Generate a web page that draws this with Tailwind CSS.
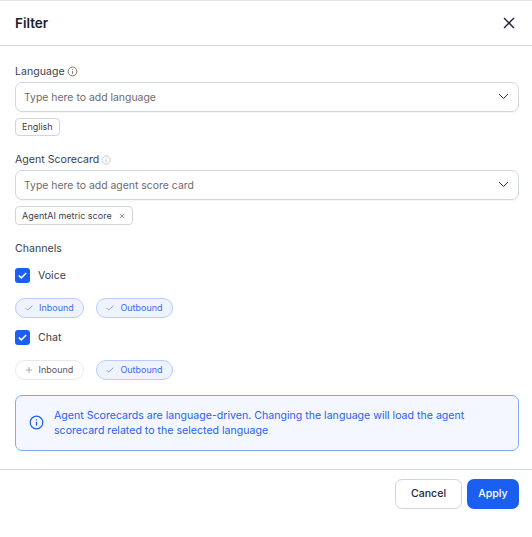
<!DOCTYPE html>
<html lang="en">
<head>
    <meta charset="UTF-8">
    <meta name="viewport" content="width=device-width, initial-scale=1.0">
    <title>Filter</title>
    <script src="https://cdn.jsdelivr.net/npm/@tailwindcss/browser@4"></script>
</head>
<body class="bg-white font-['Inter',sans-serif] text-[#1f2433] h-[537px] overflow-hidden">
    <!-- header -->
    <header class="h-[46px] border-t border-t-[#e3e4e8] border-b border-b-[#d0d4de] flex items-center justify-between pl-[15px] pr-[15px]">
        <h2 class="text-[13.5px] font-semibold text-[#1a1d2e]">Filter</h2>
        <svg class="w-[14px] h-[14px] text-[#1f2433] mr-[1px]" viewBox="0 0 14 14" fill="none" stroke="currentColor" stroke-width="1.4"><path d="M2 2l10 10M12 2L2 12"/></svg>
    </header>

    <main class="pl-[15px] pr-[13px] pt-[18px]">
        <!-- language -->
        <div class="flex items-center gap-[2px] h-[15px] text-[10.6px] leading-[15px] text-[#3a3f4f]">
            <span>Language</span>
            <svg class="w-[11px] h-[11px] text-[#7a6f5f] mb-[1px]" viewBox="0 0 12 12" fill="none" stroke="currentColor" stroke-width="1"><circle cx="6" cy="6" r="4.8"/><path d="M6 5.5v3M6 3.4v1"/></svg>
        </div>
        <div class="mt-[3px] h-[30px] border border-[#d0d4de] rounded-[7px] flex items-center justify-between pl-[8px] pr-[9px] shadow-[0_1px_1px_rgba(20,30,60,0.04)]">
            <span class="text-[10.45px] pt-[1px] text-[#6f6a6e]">Type here to add language</span>
            <svg class="w-[11px] h-[7px] text-[#2a3348] mb-[1px]" viewBox="0 0 11 7" fill="none" stroke="currentColor" stroke-width="1"><path d="M1 1l4.5 4.5L10 1"/></svg>
        </div>
        <div class="mt-[6px] flex">
            <span class="h-[18px] px-[6px] border border-[#d0d4de] rounded-[4px] text-[9px] leading-[16px] text-[#3a3f4f]">English</span>
        </div>

        <!-- agent scorecard -->
        <div class="mt-[16px] flex items-center gap-[2px] h-[15px] text-[10.6px] leading-[15px] text-[#3a3f4f]">
            <span>Agent Scorecard</span>
            <svg class="w-[10px] h-[10px] text-[#a9aeb8]" viewBox="0 0 12 12" fill="none" stroke="currentColor" stroke-width="1"><circle cx="6" cy="6" r="4.8" stroke-dasharray="1.6 .5"/><path d="M6 5.5v3M6 3.4v1"/></svg>
        </div>
        <div class="mt-[3px] h-[30px] border border-[#d0d4de] rounded-[7px] flex items-center justify-between pl-[8px] pr-[9px] shadow-[0_1px_1px_rgba(20,30,60,0.04)]">
            <span class="text-[10.45px] pt-[1px] text-[#6f6a6e]">Type here to add agent score card</span>
            <svg class="w-[11px] h-[7px] text-[#2a3348] mb-[1px]" viewBox="0 0 11 7" fill="none" stroke="currentColor" stroke-width="1"><path d="M1 1l4.5 4.5L10 1"/></svg>
        </div>
        <div class="mt-[6px] flex">
            <span class="h-[19px] px-[6px] border border-[#d0d4de] rounded-[4px] text-[9px] text-[#3a3f4f] flex items-center gap-[7px]">
                AgentAI metric score
                <svg class="w-[6px] h-[6px] text-[#8d919c] mr-[1px]" viewBox="0 0 6 6" fill="none" stroke="currentColor" stroke-width="1"><path d="M.8.8l4.4 4.4M5.2.8L.8 5.2"/></svg>
            </span>
        </div>

        <!-- channels -->
        <div class="mt-[16px] h-[15px] text-[10.6px] leading-[15px] text-[#3a3f4f]">Channels</div>

        <div class="mt-[12px] flex items-center gap-[8px] h-[15px]">
            <span class="w-[15px] h-[15px] rounded-[3px] bg-[#1a5ff0] flex items-center justify-center">
                <svg class="w-[9px] h-[7px]" viewBox="0 0 9 7" fill="none" stroke="white" stroke-width="1.5"><path d="M.8 3.5l2.5 2.4L8.2 1"/></svg>
            </span>
            <span class="text-[10.6px] text-[#3a3f4f]">Voice</span>
        </div>
        <div class="mt-[15px] flex gap-[12px]">
            <span class="w-[69px] h-[20px] rounded-full border border-[#b4cdfb] bg-[#eef3fe] flex items-center justify-center gap-[6px] text-[9px] text-[#3d6cf0]">
                <svg class="w-[8px] h-[6px] text-[#8ba0de] mb-[1px]" viewBox="0 0 8 6" fill="none" stroke="currentColor" stroke-width="1"><path d="M.6 3l2.1 2.1L7.4.6"/></svg>
                Inbound
            </span>
            <span class="w-[77px] h-[20px] rounded-full border border-[#b4cdfb] bg-[#eef3fe] flex items-center justify-center gap-[6px] text-[9px] text-[#3d6cf0]">
                <svg class="w-[8px] h-[6px] text-[#8ba0de] mb-[1px]" viewBox="0 0 8 6" fill="none" stroke="currentColor" stroke-width="1"><path d="M.6 3l2.1 2.1L7.4.6"/></svg>
                Outbound
            </span>
        </div>

        <div class="mt-[12px] flex items-center gap-[8px] h-[15px]">
            <span class="w-[15px] h-[15px] rounded-[3px] bg-[#1a5ff0] flex items-center justify-center">
                <svg class="w-[9px] h-[7px]" viewBox="0 0 9 7" fill="none" stroke="white" stroke-width="1.5"><path d="M.8 3.5l2.5 2.4L8.2 1"/></svg>
            </span>
            <span class="text-[10.6px] text-[#3a3f4f]">Chat</span>
        </div>
        <div class="mt-[15px] flex gap-[12px]">
            <span class="w-[69px] h-[20px] rounded-full border border-[#e8e9ed] bg-white flex items-center justify-center gap-[7px] text-[9px] text-[#5a5468]">
                <svg class="w-[6px] h-[6px] text-[#a8aab3] mb-[1px]" viewBox="0 0 6 6" fill="none" stroke="currentColor" stroke-width="1"><path d="M3 0v6M0 3h6"/></svg>
                Inbound
            </span>
            <span class="w-[77px] h-[20px] rounded-full border border-[#b4cdfb] bg-[#eef3fe] flex items-center justify-center gap-[6px] text-[9px] text-[#3d6cf0]">
                <svg class="w-[8px] h-[6px] text-[#8ba0de] mb-[1px]" viewBox="0 0 8 6" fill="none" stroke="currentColor" stroke-width="1"><path d="M.6 3l2.1 2.1L7.4.6"/></svg>
                Outbound
            </span>
        </div>

        <!-- info box -->
        <div class="mt-[15px] h-[56px] border border-[#82a8f8] rounded-[7px] bg-[#f4f7ff] flex items-center pl-[13px] pr-[40px]">
            <svg class="w-[15px] h-[15px] text-[#1a5ff0] shrink-0 mb-[1px]" viewBox="0 0 15 15" fill="none" stroke="currentColor" stroke-width="1.2"><circle cx="7.5" cy="7.5" r="6.3"/><path d="M7.5 6.8v4M7.5 4.2v1.2"/></svg>
            <p class="ml-[10px] text-[10.6px] leading-[15px] text-[#2a5ff0]">Agent Scorecards are language-driven. Changing the language will load the agent scorecard related to the selected language</p>
        </div>
    </main>

    <!-- footer -->
    <footer class="mt-[18px] border-t border-[#d0d4de] pt-[9px] pr-[13px] flex justify-end gap-[5px]">
        <button class="w-[67px] h-[30px] border border-[#d0d4de] rounded-[7px] bg-white text-[10.6px] font-medium text-[#1f2433]">Cancel</button>
        <button class="w-[52px] h-[30px] rounded-[7px] bg-[#1a5ff0] text-[10.6px] font-medium text-white">Apply</button>
    </footer>
</body>
</html>
